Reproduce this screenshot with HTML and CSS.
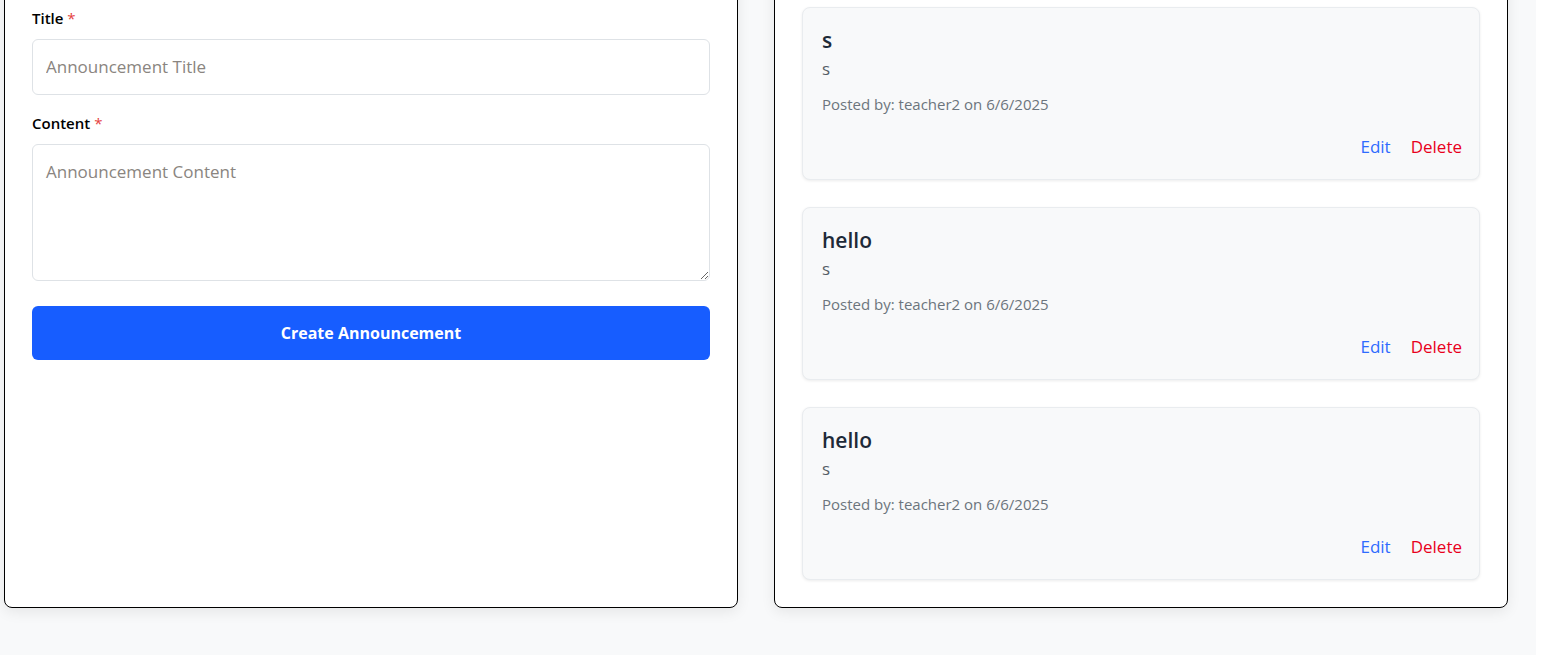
FILE: index.html
```html
<!DOCTYPE html>
<html lang="en">
<head>
<meta charset="utf-8">
<title>Announcements</title>
<link rel="stylesheet" href="styles.css">
</head>
<body>
<div class="page">
  <div class="grid">
    <section class="card">
      <form class="form">
        <div class="group">
          <label class="label" for="title">Title <span class="req">*</span></label>
          <input class="input" id="title" type="text" placeholder="Announcement Title">
        </div>
        <div class="group group-last">
          <label class="label" for="content">Content <span class="req">*</span></label>
          <textarea class="input textarea" id="content" placeholder="Announcement Content"></textarea>
        </div>
        <button class="btn" type="button">Create Announcement</button>
      </form>
    </section>
    <section class="card list">
      <article class="item">
        <h3 class="item-title">s</h3>
        <p class="item-body">s</p>
        <p class="item-meta">Posted by: teacher2 on 6/6/2025</p>
        <div class="actions"><a class="edit">Edit</a><a class="delete">Delete</a></div>
      </article>
      <article class="item">
        <h3 class="item-title">hello</h3>
        <p class="item-body">s</p>
        <p class="item-meta">Posted by: teacher2 on 6/6/2025</p>
        <div class="actions"><a class="edit">Edit</a><a class="delete">Delete</a></div>
      </article>
      <article class="item">
        <h3 class="item-title">hello</h3>
        <p class="item-body">s</p>
        <p class="item-meta">Posted by: teacher2 on 6/6/2025</p>
        <div class="actions"><a class="edit">Edit</a><a class="delete">Delete</a></div>
      </article>
    </section>
  </div>
</div>
</body>
</html>
```
FILE: styles.css
```css
* { box-sizing: border-box; }
html, body { margin: 0; padding: 0; background: #ffffff; }
body {
  font-family: "Open Sans", "Noto Sans", Arial, sans-serif;
  color: #212529;
}
.page {
  width: 1536px;
  height: 655px;
  background: #f8f9fa;
  overflow: hidden;
}
.grid {
  display: grid;
  grid-template-columns: 734px 734px;
  column-gap: 36px;
  margin-top: -21px;
  padding-left: 4px;
  align-items: stretch;
}
.card {
  background: #ffffff;
  border: 1px solid #000000;
  border-radius: 8px;
  padding: 27px;
  box-shadow: 0 4px 14px rgba(0, 0, 0, 0.08);
}
.form { display: flex; flex-direction: column; padding-top: 1px; }
.group { display: flex; flex-direction: column; margin-bottom: 18px; }
.group-last { margin-bottom: 25px; }
.label {
  font-size: 15px;
  line-height: 21px;
  font-weight: 600;
  color: #000000;
  margin-bottom: 10px;
}
.req { color: #e53e3e; font-weight: 400; }
.input {
  display: block;
  width: 100%;
  font-family: inherit;
  font-size: 17px;
  line-height: 24px;
  padding: 15px 13px;
  border: 1px solid #dee2e6;
  border-radius: 6px;
  background: #ffffff;
  color: #212529;
  margin: 0;
}
.input::placeholder { color: #8a8580; }
.textarea { height: 137px; resize: vertical; }
.btn {
  height: 54px;
  width: 100%;
  border: none;
  border-radius: 6px;
  background: #175dff;
  color: #ffffff;
  font-family: inherit;
  font-size: 16px;
  font-weight: 700;
}
.list { display: flex; flex-direction: column; gap: 27px; }
.item {
  background: #f8f9fa;
  border: 1px solid #e9ecef;
  border-radius: 8px;
  padding: 20px 19px 19px;
  box-shadow: 0 1px 3px rgba(0, 0, 0, 0.08);
  height: 173px;
}
.item-title {
  margin: 0 0 5px;
  font-size: 21px;
  line-height: 24px;
  font-weight: 600;
  color: #1e2a38;
}
.item-body {
  margin: 0 0 13px;
  font-size: 17px;
  line-height: 24px;
  color: #555d66;
}
.item-meta {
  margin: 0 0 20px;
  font-size: 15px;
  line-height: 21px;
  color: #6c757d;
}
.actions {
  display: flex;
  justify-content: flex-end;
  gap: 20px;
  font-size: 17px;
  line-height: 24px;
  margin-right: -2px;
}
.edit { color: #2f6bff; }
.delete { color: #e8001c; }
```
